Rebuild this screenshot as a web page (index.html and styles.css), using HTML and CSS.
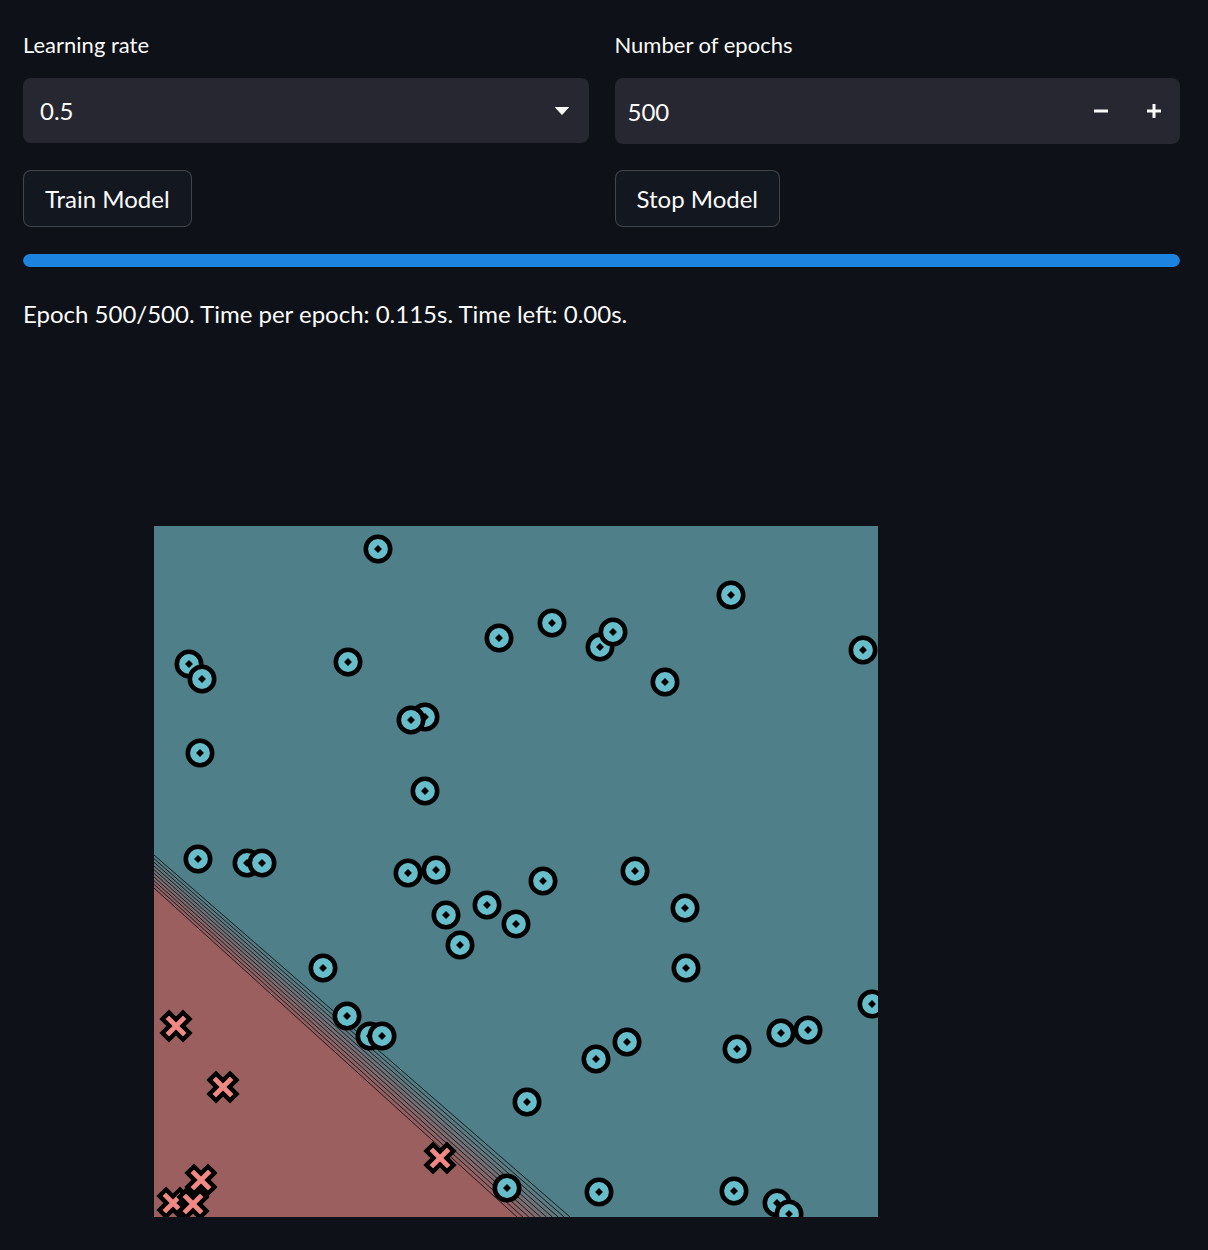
FILE: index.html
```html
<!DOCTYPE html>
<html>
<head>
<meta charset="utf-8">
<link rel="stylesheet" href="styles.css">
</head>
<body>
<main class="main">
  <div class="row">
    <div class="field">
      <label class="label">Learning rate</label>
      <div class="select">
        <span class="value">0.5</span>
        <svg class="caret" width="14" height="8" viewBox="0 0 14 8"><path d="M0.5 0.5 H13.5 L7 7.5 Z" fill="#fafafa" stroke="#fafafa" stroke-width="1" stroke-linejoin="round"/></svg>
      </div>
    </div>
    <div class="field">
      <label class="label">Number of epochs</label>
      <div class="number">
        <span class="value">500</span>
        <div class="steps">
          <span class="step"><svg width="14" height="14" viewBox="0 0 14 14"><rect x="0" y="5.5" width="14" height="3" fill="#fafafa"/></svg></span>
          <span class="step"><svg width="14" height="14" viewBox="0 0 14 14"><rect x="0" y="5.5" width="14" height="3" fill="#fafafa"/><rect x="5.5" y="0" width="3" height="14" fill="#fafafa"/></svg></span>
        </div>
      </div>
    </div>
  </div>
  <div class="row buttons">
    <div><button class="btn">Train Model</button></div>
    <div><button class="btn">Stop Model</button></div>
  </div>
  <div class="progress"><div class="bar" style="width:100%"></div></div>
  <p class="status">Epoch 500/500. Time per epoch: 0.115s. Time left: 0.00s.</p>
  <div class="plot">
    <svg width="724" height="691" viewBox="0 0 724 691">
      <defs>
        <clipPath id="ax"><rect x="0" y="0" width="724" height="691"/></clipPath>
        <g id="o">
          <circle r="12.2" fill="#68bdcb" stroke="#000" stroke-width="4.6"/>
          <rect x="-2.8" y="-2.8" width="5.6" height="5.6" transform="rotate(45)" fill="#000"/>
        </g>
        <g id="x">
          <polygon transform="rotate(45)" points="4.6,4.6 4.6,14.5 -4.6,14.5 -4.6,4.6 -14.5,4.6 -14.5,-4.6 -4.6,-4.6 -4.6,-14.5 4.6,-14.5 4.6,-4.6 14.5,-4.6 14.5,4.6" fill="#f08984" stroke="#000" stroke-width="4.4" stroke-linejoin="miter"/>
        </g>
      </defs>
      <g clip-path="url(#ax)">
        <rect x="0" y="0" width="724" height="691" fill="#4f7f89"/>
        <polygon points="0,362 363,691 0,691" fill="#9b5f5f"/>
        <polygon points="0,362 363,691 368.9,691 0,358.3" fill="#975f61"/>
        <polygon points="0,358.3 368.9,691 374.8,691 0,354.7" fill="#8e6567"/>
        <polygon points="0,354.7 374.8,691 380.7,691 0,351" fill="#86686c"/>
        <polygon points="0,351 380.7,691 386.6,691 0,347.3" fill="#7d6c70"/>
        <polygon points="0,347.3 386.6,691 392.4,691 0,343.7" fill="#757075"/>
        <polygon points="0,343.7 392.4,691 398.3,691 0,340" fill="#6d737a"/>
        <polygon points="0,340 398.3,691 404.2,691 0,336.3" fill="#64777e"/>
        <polygon points="0,336.3 404.2,691 410.1,691 0,332.7" fill="#5c7b83"/>
        <polygon points="0,332.7 410.1,691 416,691 0,329" fill="#537e88"/>
        <g stroke="#111" stroke-opacity="0.9" stroke-width="1" fill="none">
          <line x1="0" y1="362" x2="363" y2="691"/>
          <line x1="0" y1="358.3" x2="368.9" y2="691"/>
          <line x1="0" y1="354.7" x2="374.8" y2="691"/>
          <line x1="0" y1="351" x2="380.7" y2="691"/>
          <line x1="0" y1="347.3" x2="386.6" y2="691"/>
          <line x1="0" y1="343.7" x2="392.4" y2="691"/>
          <line x1="0" y1="340" x2="398.3" y2="691"/>
          <line x1="0" y1="336.3" x2="404.2" y2="691"/>
          <line x1="0" y1="332.7" x2="410.1" y2="691"/>
          <line x1="0" y1="329" x2="416" y2="691"/>
        </g>
        <use href="#x" x="22" y="500"/>
        <use href="#x" x="69" y="561"/>
        <use href="#x" x="286" y="632"/>
        <use href="#x" x="47" y="654"/>
        <use href="#x" x="19" y="677"/>
        <use href="#x" x="39" y="678"/>
        <use href="#o" x="224" y="23"/>
        <use href="#o" x="577" y="69"/>
        <use href="#o" x="345" y="112"/>
        <use href="#o" x="398" y="97"/>
        <use href="#o" x="446" y="121"/>
        <use href="#o" x="459" y="106"/>
        <use href="#o" x="709" y="124"/>
        <use href="#o" x="35" y="138"/>
        <use href="#o" x="48" y="153"/>
        <use href="#o" x="194" y="136"/>
        <use href="#o" x="511" y="156"/>
        <use href="#o" x="271" y="191"/>
        <use href="#o" x="257" y="194"/>
        <use href="#o" x="46" y="227"/>
        <use href="#o" x="271" y="265"/>
        <use href="#o" x="44" y="333"/>
        <use href="#o" x="93" y="337"/>
        <use href="#o" x="108" y="337"/>
        <use href="#o" x="254" y="347"/>
        <use href="#o" x="282" y="344"/>
        <use href="#o" x="389" y="355"/>
        <use href="#o" x="481" y="345"/>
        <use href="#o" x="333" y="379"/>
        <use href="#o" x="292" y="389"/>
        <use href="#o" x="362" y="398"/>
        <use href="#o" x="531" y="382"/>
        <use href="#o" x="306" y="419"/>
        <use href="#o" x="169" y="442"/>
        <use href="#o" x="532" y="442"/>
        <use href="#o" x="718" y="478"/>
        <use href="#o" x="193" y="490"/>
        <use href="#o" x="216" y="510"/>
        <use href="#o" x="228" y="510"/>
        <use href="#o" x="442" y="533"/>
        <use href="#o" x="473" y="516"/>
        <use href="#o" x="583" y="523"/>
        <use href="#o" x="627" y="507"/>
        <use href="#o" x="654" y="504"/>
        <use href="#o" x="373" y="576"/>
        <use href="#o" x="353" y="662"/>
        <use href="#o" x="445" y="666"/>
        <use href="#o" x="580" y="665"/>
        <use href="#o" x="623" y="677"/>
        <use href="#o" x="635" y="688"/>
      </g>
    </svg>
  </div>
</main>
</body>
</html>
```
FILE: styles.css
```css
html, body {
  margin: 0;
  padding: 0;
  background: #0e1117;
  color: #fafafa;
  font-family: Lato, "Liberation Sans", sans-serif;
}

.main {
  padding: 30px 28px 0 23px;
}

.row {
  display: grid;
  grid-template-columns: 1fr 1fr;
  column-gap: 26px;
}

.field {
  display: flex;
  flex-direction: column;
}

.label {
  font-size: 22px;
  line-height: 30px;
  margin-bottom: 18px;
}

.select,
.number {
  display: flex;
  align-items: center;
  justify-content: space-between;
  background: #262730;
  border-radius: 8px;
  font-size: 24px;
  box-sizing: border-box;
}

.select {
  height: 65px;
  padding: 0 20px 0 17px;
}

.number {
  height: 66px;
  padding: 0 0 0 13px;
}

.steps {
  display: flex;
  height: 100%;
}

.step {
  width: 53px;
  display: flex;
  align-items: center;
  justify-content: center;
}

.buttons {
  margin-top: 26px;
}

.btn {
  height: 57px;
  padding: 0 21px;
  border: 1px solid rgba(250, 250, 250, 0.2);
  border-radius: 8px;
  background: #131720;
  color: #fafafa;
  font-family: inherit;
  font-size: 24px;
}

.progress {
  margin-top: 27px;
  height: 13px;
  border-radius: 7px;
  background: #262730;
  overflow: hidden;
}

.bar {
  height: 100%;
  background: #1c83e1;
  border-radius: 7px;
}

.status {
  margin: 29px 0 0;
  font-size: 24px;
  line-height: 36px;
}

.plot {
  margin: 194px 0 0 131px;
  line-height: 0;
}
```
